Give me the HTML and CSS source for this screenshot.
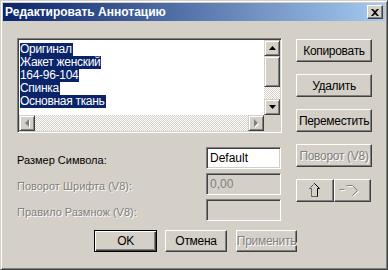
FILE: index.html
```html
<!DOCTYPE html>
<html lang="ru">
<head>
    <meta charset="UTF-8">
    <title>Редактировать Аннотацию</title>
    <link rel="stylesheet" href="styles.css">
</head>
<body>
    <div class="window">
        <div class="titlebar">
            <span class="title">Редактировать Аннотацию</span>
            <div class="close">
                <svg width="8" height="7" viewBox="0 0 8 7"><path d="M0 0h2l2 2 2-2h2L5 3.5 8 7H6L4 5 2 7H0l3-3.5z" fill="#000"/></svg>
            </div>
        </div>
        <div class="content">
            <div class="main">
                <div class="left">
                    <div class="listbox">
                        <div class="list-items">
                            <div class="line"><span>Оригинал</span></div>
                            <div class="line"><span>Жакет женский</span></div>
                            <div class="line"><span>164-96-104</span></div>
                            <div class="line"><span>Спинка</span></div>
                            <div class="line"><span>Основная ткань</span></div>
                        </div>
                        <div class="vscroll">
                            <div class="sbtn">
                                <svg width="7" height="4" viewBox="0 0 7 4"><path d="M3.5 0L7 4H0z" fill="#000"/></svg>
                            </div>
                            <div class="thumb"></div>
                            <div class="track"></div>
                            <div class="sbtn">
                                <svg width="7" height="4" viewBox="0 0 7 4"><path d="M0 0h7L3.5 4z" fill="#000"/></svg>
                            </div>
                        </div>
                        <div class="hscroll">
                            <div class="sbtn">
                                <svg width="5" height="9" viewBox="0 0 5 9"><path d="M1 5l4 4V1z" fill="#fff"/><path d="M0 4l4-4v8z" fill="#808080"/></svg>
                            </div>
                            <div class="track"></div>
                            <div class="sbtn">
                                <svg width="5" height="9" viewBox="0 0 5 9"><path d="M1 1v8l4-4z" fill="#fff"/><path d="M0 0v8l4-4z" fill="#808080"/></svg>
                            </div>
                        </div>
                        <div class="corner"></div>
                    </div>
                    <div class="form">
                        <div class="row">
                            <span class="label">Размер Символа:</span>
                            <div class="field">Default</div>
                        </div>
                        <div class="row">
                            <span class="label disabled">Поворот Шрифта (V8):</span>
                            <div class="field off">0,00</div>
                        </div>
                        <div class="row">
                            <span class="label disabled">Правило Размнож (V8):</span>
                            <div class="field off"></div>
                        </div>
                    </div>
                </div>
                <div class="right">
                    <div class="btn">Копировать</div>
                    <div class="btn">Удалить</div>
                    <div class="btn">Переместить</div>
                    <div class="btn disabled">Поворот (V8)</div>
                    <div class="arrows">
                        <div class="btn">
                            <svg width="12" height="15" viewBox="0 0 12 15">
                                <path d="M5.5 0.5L10.5 5.5H8.5V13.5" fill="none" stroke="#000"/>
                                <path d="M5.5 0.5L0.5 5.5H2.5V13.5H8.5" fill="none" stroke="#000" stroke-dasharray="1 1"/>
                            </svg>
                        </div>
                        <div class="btn">
                            <svg class="turn" width="22" height="15" viewBox="0 0 22 15">
                                <path d="M0.5 6.5h5M7.5 2.5H13.5L18.5 7.5L13.5 12.5" fill="none" stroke="#fff" transform="translate(1 1)"/>
                                <path d="M0.5 6.5h5M7.5 2.5H13.5L18.5 7.5L13.5 12.5" fill="none" stroke="#808080"/>
                            </svg>
                        </div>
                    </div>
                </div>
            </div>
            <div class="footer">
                <div class="btn default">OK</div>
                <div class="btn cancel">Отмена</div>
                <div class="btn apply disabled">Применить</div>
            </div>
        </div>
    </div>
</body>
</html>
```

FILE: styles.css
```css
* {
    box-sizing: border-box;
}
body {
    margin: 0;
    background-color: #d4d0c8;
    font-family: "Liberation Sans", Arial, sans-serif;
    font-size: 11px;
    color: #000;
}
.window {
    width: 388px;
    height: 270px;
    border: 1px solid;
    border-color: #d4d0c8 #404040 #404040 #d4d0c8;
    box-shadow: inset 1px 1px #fff, inset -1px -1px #808080;
    padding: 2px;
}
.titlebar {
    height: 18px;
    background: linear-gradient(to right, #0a246a, #a6caf0);
    display: flex;
    align-items: center;
    justify-content: space-between;
    padding: 0 2px 0 2px;
}
.title {
    color: #fff;
    font-weight: bold;
    font-size: 12px;
}
.close {
    width: 16px;
    height: 14px;
    display: flex;
    align-items: center;
    justify-content: center;
    background-color: #d4d0c8;
    border: 1px solid;
    border-color: #fff #404040 #404040 #fff;
    box-shadow: inset -1px -1px #808080;
}
.content {
    padding: 17px 0 0 14px;
}
.main {
    display: flex;
    gap: 14px;
}
.left {
    width: 265px;
}
.listbox {
    height: 95px;
    border: 1px solid;
    border-color: #808080 #fff #fff #808080;
    box-shadow: inset 1px 1px #404040, inset -1px -1px #d4d0c8;
    padding: 1px;
    background-color: #fff;
    display: grid;
    grid-template-columns: 1fr 16px;
    grid-template-rows: 1fr 16px;
}
.list-items {
    padding: 2px 0 0 1px;
    font-size: 12px;
    letter-spacing: -0.3px;
}
.line {
    height: 13px;
}
.line span {
    display: inline-block;
    height: 13px;
    line-height: 13px;
    background-color: #0a246a;
    color: #fff;
    padding-right: 1px;
}
.vscroll {
    display: flex;
    flex-direction: column;
}
.hscroll {
    display: flex;
}
.sbtn, .thumb {
    background-color: #d4d0c8;
    border: 1px solid;
    border-color: #d4d0c8 #404040 #404040 #d4d0c8;
    box-shadow: inset 1px 1px #fff, inset -1px -1px #808080;
}
.sbtn {
    width: 16px;
    height: 16px;
    display: flex;
    align-items: center;
    justify-content: center;
}
.thumb {
    height: 31px;
}
.track {
    flex: 1;
    background: repeating-conic-gradient(#d4d0c8 0 25%, #fff 0 50%) 0 0 / 2px 2px;
}
.corner {
    background-color: #d4d0c8;
}
.form {
    margin-top: 14px;
    display: flex;
    flex-direction: column;
    gap: 4px;
    padding-right: 1px;
}
.row {
    height: 22px;
    display: flex;
    align-items: center;
    justify-content: space-between;
}
.label {
    padding-top: 3px;
}
.disabled {
    color: #808080;
    text-shadow: 1px 1px #fff;
}
.field {
    width: 75px;
    height: 22px;
    border: 1px solid;
    border-color: #808080 #fff #fff #808080;
    box-shadow: inset 1px 1px #404040, inset -1px -1px #d4d0c8;
    background-color: #fff;
    padding: 3px 0 0 3px;
    font-size: 12px;
}
.field.off {
    background-color: #d4d0c8;
    color: #808080;
}
.right {
    width: 76px;
    padding-top: 1px;
    display: flex;
    flex-direction: column;
    gap: 12px;
}
.btn {
    height: 23px;
    display: flex;
    align-items: center;
    justify-content: center;
    background-color: #d4d0c8;
    border: 1px solid;
    border-color: #fff #404040 #404040 #fff;
    box-shadow: inset -1px -1px #808080;
    font-size: 12px;
    letter-spacing: -0.3px;
}
.arrows {
    display: flex;
}
.arrows .btn {
    width: 38px;
}
.arrows .btn + .btn {
    width: 37px;
}
.turn {
    margin-right: 6px;
}
.footer {
    margin-top: 9px;
    padding-left: 77px;
    display: flex;
}
.footer .btn {
    height: 22px;
}
.btn.default {
    width: 63px;
    border: 1px solid #000;
    box-shadow: inset 1px 1px #fff, inset -1px -1px #404040, inset -2px -2px #808080;
}
.btn.cancel {
    width: 62px;
    margin-left: 8px;
}
.btn.apply {
    width: 61px;
    margin-left: 9px;
}
```
